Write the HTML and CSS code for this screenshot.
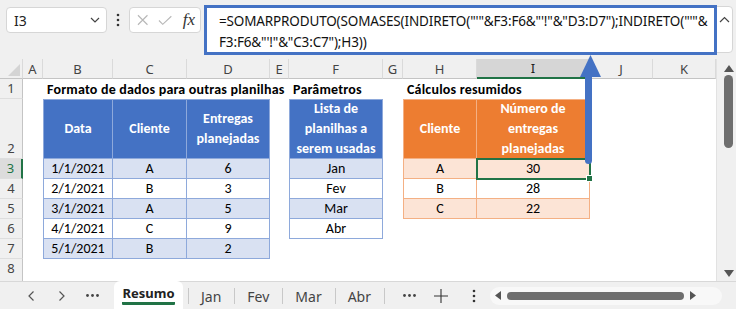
FILE: index.html
```html
<!DOCTYPE html>
<html lang="pt">
<head>
    <meta charset="UTF-8">
    <title>Resumo</title>
    <link rel="stylesheet" href="styles.css">
</head>
<body>

<div class="topbar">
    <div class="namebox">
        <span>I3</span>
        <svg width="10" height="6" viewBox="0 0 10 6"><polyline points="1,1 5,5 9,1" fill="none" stroke="#444" stroke-width="1.2"/></svg>
    </div>
    <div class="dots">
        <svg width="4" height="14" viewBox="0 0 4 14"><circle cx="2" cy="2" r="1.3" fill="#333"/><circle cx="2" cy="7" r="1.3" fill="#333"/><circle cx="2" cy="12" r="1.3" fill="#333"/></svg>
    </div>
    <div class="fxbox">
        <svg width="12" height="12" viewBox="0 0 12 12"><path d="M1 1L11 11M11 1L1 11" stroke="#b8b8b8" stroke-width="1.2"/></svg>
        <svg width="15" height="11" viewBox="0 0 15 11"><polyline points="1,5.5 5,9.5 14,1" fill="none" stroke="#b8b8b8" stroke-width="1.2"/></svg>
        <span class="fx">fx</span>
    </div>
    <div class="formula">
        <div class="formula-text">=SOMARPRODUTO(SOMASES(INDIRETO("'"&amp;F3:F6&amp;"'!"&amp;"D3:D7");INDIRETO("'"&amp;<br>F3:F6&amp;"'!"&amp;"C3:C7");H3))</div>
        <div class="formula-caret">
            <svg width="11" height="7" viewBox="0 0 11 7"><polyline points="1,6 5.5,1.5 10,6" fill="none" stroke="#444" stroke-width="1.2"/></svg>
        </div>
    </div>
</div>

<div class="sheet">
    <div class="colheads">
        <div class="ch corner"><svg width="12" height="12" viewBox="0 0 12 12"><polygon points="12,0 12,12 0,12" fill="#d4d4d4"/></svg></div>
        <div class="ch">A</div>
        <div class="ch">B</div>
        <div class="ch">C</div>
        <div class="ch">D</div>
        <div class="ch">E</div>
        <div class="ch">F</div>
        <div class="ch">G</div>
        <div class="ch">H</div>
        <div class="ch sel">I</div>
        <div class="ch">J</div>
        <div class="ch">K</div>
    </div>

    <div class="rowheads">
        <div class="rh">1</div>
        <div class="rh">2</div>
        <div class="rh sel">3</div>
        <div class="rh">4</div>
        <div class="rh">5</div>
        <div class="rh">6</div>
        <div class="rh">7</div>
        <div class="rh">8</div>
    </div>

    <div class="title title-a">Formato de dados para outras planilhas</div>
    <div class="title title-b">Parâmetros</div>
    <div class="title title-c">Cálculos resumidos</div>

    <div class="tbl blue t-data">
        <div class="hd">Data</div>
        <div class="hd">Cliente</div>
        <div class="hd">Entregas<br>planejadas</div>
        <div class="band">1/1/2021</div><div class="band">A</div><div class="band">6</div>
        <div>2/1/2021</div><div>B</div><div>3</div>
        <div class="band">3/1/2021</div><div class="band">A</div><div class="band">5</div>
        <div>4/1/2021</div><div>C</div><div>9</div>
        <div class="band">5/1/2021</div><div class="band">B</div><div class="band">2</div>
    </div>

    <div class="tbl blue t-sheets">
        <div class="hd">Lista de<br>planilhas a<br>serem usadas</div>
        <div class="band">Jan</div>
        <div>Fev</div>
        <div class="band">Mar</div>
        <div>Abr</div>
    </div>

    <div class="tbl orange t-sum">
        <div class="hd">Cliente</div>
        <div class="hd">Número de<br>entregas<br>planejadas</div>
        <div class="band">A</div><div class="band active">30</div>
        <div>B</div><div>28</div>
        <div class="band">C</div><div class="band">22</div>
    </div>

    <div class="vscroll">
        <svg width="10" height="7" viewBox="0 0 10 7"><polygon points="5,0 10,7 0,7" fill="#555"/></svg>
        <div class="vthumb"></div>
        <div class="vspace"></div>
        <svg width="10" height="7" viewBox="0 0 10 7"><polygon points="0,0 10,0 5,7" fill="#555"/></svg>
    </div>
</div>

<div class="tabbar">
    <div class="nav"><svg width="6" height="10" viewBox="0 0 6 10"><polyline points="5.5,0.5 1,5 5.5,9.5" fill="none" stroke="#555" stroke-width="1.2"/></svg></div>
    <div class="nav"><svg width="6" height="10" viewBox="0 0 6 10"><polyline points="0.5,0.5 5,5 0.5,9.5" fill="none" stroke="#555" stroke-width="1.2"/></svg></div>
    <div class="nav"><svg width="13" height="3" viewBox="0 0 13 3"><circle cx="1.5" cy="1.5" r="1.4" fill="#444"/><circle cx="6.5" cy="1.5" r="1.4" fill="#444"/><circle cx="11.5" cy="1.5" r="1.4" fill="#444"/></svg></div>
    <div class="tab active"><span>Resumo</span></div>
    <div class="tab">Jan</div>
    <div class="tab">Fev</div>
    <div class="tab">Mar</div>
    <div class="tab">Abr</div>
    <div class="tab-end"></div>
    <div class="ctl ctl-more"><svg width="13" height="3" viewBox="0 0 13 3"><circle cx="1.5" cy="1.5" r="1.4" fill="#444"/><circle cx="6.5" cy="1.5" r="1.4" fill="#444"/><circle cx="11.5" cy="1.5" r="1.4" fill="#444"/></svg></div>
    <div class="ctl ctl-add"><svg width="14" height="14" viewBox="0 0 14 14"><path d="M7 0V14M0 7H14" stroke="#333" stroke-width="1.1"/></svg></div>
    <div class="ctl ctl-menu"><svg width="4" height="14" viewBox="0 0 4 14"><circle cx="2" cy="2" r="1.3" fill="#333"/><circle cx="2" cy="7" r="1.3" fill="#333"/><circle cx="2" cy="12" r="1.3" fill="#333"/></svg></div>
    <div class="hscroll">
        <svg width="6" height="9" viewBox="0 0 6 9"><polygon points="6,0 6,9 0,4.5" fill="#555"/></svg>
        <div class="hthumb"></div>
        <svg width="6" height="9" viewBox="0 0 6 9"><polygon points="0,0 6,4.5 0,9" fill="#555"/></svg>
    </div>
</div>

<!-- seta de destaque entre a fórmula e a célula I3 -->
<svg class="arrow" width="30" height="118" viewBox="0 0 30 118">
    <rect x="9" y="22" width="7" height="92" rx="3.5" fill="#4472c4"/>
    <polygon points="14.5,5 25,27 4,27" fill="#4472c4"/>
</svg>

</body>
</html>
```

FILE: styles.css
```css
body {
    margin: 0;
    width: 736px;
    height: 309px;
    overflow: hidden;
    position: relative;
    background-color: #f0f0f0;
    font-family: "Noto Sans", "Open Sans", sans-serif;
    color: #222;
    --cols: 23px 20px 70px 74px 83px 19px 94px 20px 74px 113px 63px 63px;
}

/* barra de fórmulas */
.topbar {
    display: flex;
    align-items: flex-start;
    height: 59px;
    box-sizing: border-box;
    padding: 5px 3px 0 6px;
}

.namebox {
    margin-top: 2px;
    width: 101px;
    height: 26px;
    box-sizing: border-box;
    background-color: white;
    border: 1px solid #d6d6d6;
    border-radius: 4px;
    display: flex;
    align-items: center;
    justify-content: space-between;
    padding: 0 6px 0 7px;
    font-size: 14px;
}

.dots {
    width: 22px;
    height: 26px;
    margin-top: 2px;
    display: flex;
    align-items: center;
    justify-content: center;
}

.fxbox {
    margin-top: 2px;
    width: 72px;
    height: 26px;
    box-sizing: border-box;
    background-color: white;
    border: 1px solid #d6d6d6;
    border-radius: 4px;
    display: flex;
    align-items: center;
    padding: 0 5px 0 7px;
    gap: 10px;
}

.fx {
    margin-left: auto;
    font-family: "Liberation Serif", serif;
    font-style: italic;
    font-size: 17px;
    color: #333;
}

.formula {
    margin: 1px 0 0 3px;
    flex: 1;
    height: 47px;
    box-sizing: border-box;
    background-color: white;
    border: 1px solid #d6d6d6;
    border-radius: 4px;
    display: flex;
}

.formula-text {
    width: 513px;
    box-sizing: border-box;
    margin: -2px 0 -3px -1px;
    border: 3px solid #4472c4;
    padding: 3px 0 0 12px;
    font-size: 13.5px;
    letter-spacing: -0.15px;
    line-height: 21px;
    white-space: nowrap;
    overflow: hidden;
    color: #111;
}

.formula-caret {
    flex: 1;
    display: flex;
    justify-content: center;
    padding-top: 9px;
}

/* planilha */
.sheet {
    display: grid;
    grid-template-columns: var(--cols) 20px;
    grid-template-rows: 20px 20px 60px repeat(5, 20px) 22px;
    background-color: white;
    font-family: Calibri, Carlito, Lato, sans-serif;
    font-size: 14px;
    color: #000;
}

.colheads {
    grid-column: 1 / 13;
    grid-row: 1;
    display: grid;
    grid-template-columns: var(--cols);
}

.ch {
    display: flex;
    align-items: center;
    justify-content: center;
    background-color: #f0f0f0;
    border-right: 1px solid #dadada;
    border-bottom: 1px solid #c4c4c4;
    font-family: "Noto Sans", sans-serif;
    font-size: 13px;
    color: #444;
}

.ch.corner {
    align-items: flex-end;
    justify-content: flex-end;
    padding: 0 2px 2px 0;
}

.ch.sel {
    background-color: #d6d6d6;
    border-bottom: 2px solid #217346;
    color: #222;
}

.rowheads {
    grid-column: 1;
    grid-row: 2 / 10;
    display: grid;
    grid-template-rows: 20px 60px repeat(5, 20px) 22px;
}

.rh {
    display: flex;
    align-items: flex-end;
    justify-content: center;
    background-color: #f0f0f0;
    border-right: 1px solid #c4c4c4;
    border-bottom: 1px solid #dedede;
    font-family: "Noto Sans", sans-serif;
    font-size: 13px;
    line-height: 19px;
    color: #444;
}

.rh:last-child {
    align-items: flex-start;
    border-bottom: none;
}

.rh.sel {
    background-color: #dcdcdc;
    border-right: 2px solid #217346;
    color: #217346;
}

.title {
    grid-row: 2;
    display: flex;
    align-items: center;
    padding-left: 4px;
    font-weight: bold;
    letter-spacing: 0.2px;
    white-space: nowrap;
}

.title-a { grid-column: 3 / 7; }
.title-b { grid-column: 7 / 9; }
.title-c { grid-column: 9 / 12; }

/* tabelas */
.tbl {
    display: grid;
    border-left: 1px solid var(--bd);
    border-top: 1px solid var(--bd);
}

.tbl > div {
    display: flex;
    align-items: center;
    justify-content: center;
    text-align: center;
    border-right: 1px solid var(--bd);
    border-bottom: 1px solid var(--bd);
}

.tbl .hd {
    background-color: var(--head);
    color: white;
    font-weight: bold;
    line-height: 20px;
}

.tbl .band {
    background-color: var(--band);
}

.blue {
    --bd: #8ea9db;
    --head: #4472c4;
    --band: #d9e1f2;
}

.orange {
    --bd: #f4b084;
    --head: #ed7d31;
    --band: #fce4d6;
}

.t-data {
    grid-column: 3 / 6;
    grid-row: 3 / 9;
    grid-template-columns: 69px 74px 83px;
    grid-template-rows: 59px repeat(5, 20px);
}

.t-sheets {
    grid-column: 7;
    grid-row: 3 / 8;
    grid-template-columns: 93px;
    grid-template-rows: 59px repeat(4, 20px);
}

.t-sum {
    grid-column: 9 / 11;
    grid-row: 3 / 7;
    grid-template-columns: 73px 113px;
    grid-template-rows: 59px repeat(3, 20px);
}

.tbl > .active {
    position: relative;
    outline: 2px solid #217346;
    outline-offset: -1px;
}

.tbl > .active::after {
    content: "";
    position: absolute;
    right: -4px;
    bottom: -4px;
    width: 5px;
    height: 5px;
    background-color: #217346;
    border: 1px solid white;
}

/* barra de rolagem vertical */
.vscroll {
    grid-column: 13;
    grid-row: 1 / 10;
    display: flex;
    flex-direction: column;
    align-items: center;
    padding: 6px 0 4px 4px;
    background-color: #f0f0f0;
    border-left: 1px solid #e2e2e2;
}

.vthumb {
    margin-top: 3px;
    width: 9px;
    height: 73px;
    border-radius: 5px;
    background-color: #6e6e6e;
}

.vspace {
    flex: 1;
}

/* abas */
.tabbar {
    display: flex;
    align-items: center;
    height: 28px;
    box-sizing: border-box;
    padding-left: 15px;
    border-top: 1px solid #d8d8d8;
    font-size: 14px;
    color: #444;
}

.nav {
    width: 31px;
    display: flex;
    justify-content: center;
}

.tab {
    height: 27px;
    display: flex;
    align-items: center;
    padding: 2px 13px 0;
    box-sizing: border-box;
    background: linear-gradient(#c8c8c8, #c8c8c8) left center / 1px 16px no-repeat;
}

.tab.active {
    margin: -1px 5px 0 6px;
    height: 28px;
    width: 69px;
    padding: 0;
    justify-content: center;
    background: white;
    border-radius: 6px 6px 0 0;
    font-size: 13px;
    font-weight: bold;
    color: #222;
}

.tab.active span {
    border-bottom: 3px solid #217346;
    border-radius: 1px;
    line-height: 17px;
}

.tab-end {
    width: 1px;
    height: 16px;
    background-color: #c8c8c8;
}

.ctl {
    width: 22px;
    display: flex;
    justify-content: center;
}

.ctl-more { margin-left: 13px; }
.ctl-add { margin-left: 10px; }
.ctl-menu { margin-left: 11px; }

.hscroll {
    margin-left: 5px;
    width: 232px;
    height: 18px;
    box-sizing: border-box;
    display: flex;
    align-items: center;
    padding: 0 6px 0 5px;
    gap: 6px;
    border-radius: 9px;
    background-color: #f8f8f8;
}

.hthumb {
    width: 177px;
    height: 8px;
    border-radius: 4px;
    background-color: #6e6e6e;
}

.arrow {
    position: absolute;
    left: 576px;
    top: 50px;
}
```
